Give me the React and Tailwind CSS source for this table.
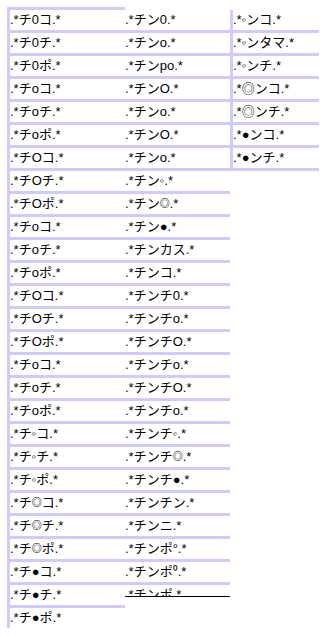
const S = () => <span className="text-[10px] font-bold align-[1px]">◎</span>;

const col1 = [
  ".*チ0コ.*", ".*チ0チ.*", ".*チ0ポ.*",
  ".*チoコ.*", ".*チoチ.*", ".*チoポ.*",
  ".*チOコ.*", ".*チOチ.*", ".*チOポ.*",
  ".*チоコ.*", ".*チоチ.*", ".*チоポ.*",
  ".*チОコ.*", ".*チОチ.*", ".*チОポ.*",
  ".*チοコ.*", ".*チοチ.*", ".*チοポ.*",
  ".*チ◦コ.*", ".*チ◦チ.*", ".*チ◦ポ.*",
  <>.*チ<S />コ.*</>, <>.*チ<S />チ.*</>, <>.*チ<S />ポ.*</>,
  ".*チ●コ.*", ".*チ●チ.*", ".*チ●ポ.*",
];
const col2 = [
  ".*チン0.*", ".*チンo.*", ".*チンpo.*", ".*チンO.*", ".*チンо.*", ".*チンО.*", ".*チンο.*",
  ".*チン◦.*", <>.*チン<S />.*</>, ".*チン●.*", ".*チンカス.*", ".*チンコ.*",
  ".*チンチ0.*", ".*チンチo.*", ".*チンチO.*", ".*チンチо.*", ".*チンチО.*", ".*チンチο.*",
  ".*チンチ◦.*", <>.*チンチ<S />.*</>, ".*チンチ●.*", ".*チンチン.*", ".*チンニ.*",
  ".*チンポ°.*", ".*チンポ⁰.*",
];
const col3 = [".*◦ンコ.*", ".*◦ンタマ.*", ".*◦ンチ.*", ".*◎ンコ.*", ".*◎ンチ.*", ".*●ンコ.*", ".*●ンチ.*"];

export default function App() {
  return (
    <div
      className="w-[323px] h-[636px] bg-white overflow-hidden text-[13px] leading-[20px] text-black flex items-start pl-[7px] pt-[7px]"
      style={{ fontFamily: '"Liberation Sans", "Noto Sans CJK JP", sans-serif' }}
    >
      <div className="w-[118px] border-l-[3px] border-[#ccccff] flex flex-col">
        {col1.map((t, i) => (
          <div key={i} className="h-[23px] border-t-[3px] border-[#ccccff] whitespace-nowrap">{t}</div>
        ))}
      </div>
      <div className="w-[105px] pt-[3px] flex flex-col">
        {col2.map((t, i) => (
          <div key={i} className="h-[23px] border-b-[3px] border-[#ccccff] whitespace-nowrap">{t}</div>
        ))}
        <div className="h-[12px] overflow-hidden border-b border-black whitespace-nowrap">.*チンポ.*</div>
      </div>
      <div className="mt-[3px] w-[89px] border-l-[3px] border-[#ccccff] flex flex-col">
        {col3.map((t, i) => (
          <div key={i} className="h-[23px] border-b-[3px] border-[#ccccff] whitespace-nowrap">{t}</div>
        ))}
      </div>
    </div>
  );
}
